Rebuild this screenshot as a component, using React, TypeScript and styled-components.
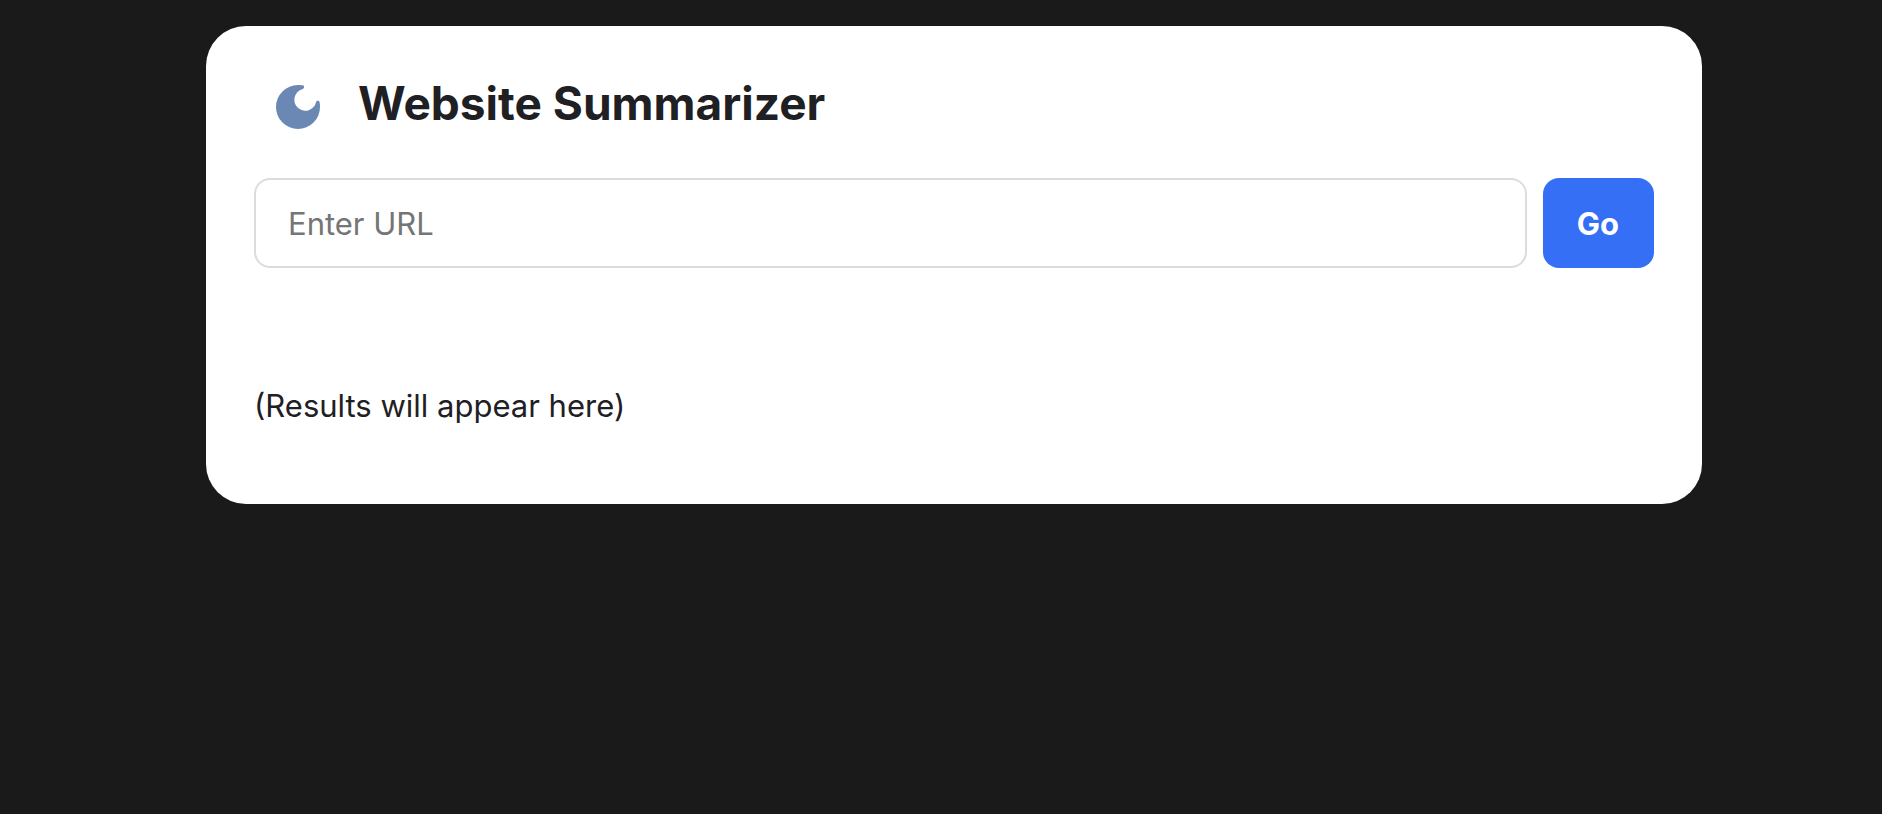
import React, { useState } from "react";
import styled, { createGlobalStyle } from "styled-components";

const GlobalStyle = createGlobalStyle`
  * { box-sizing: border-box; }
  body {
    margin: 0;
    background: #1a1a1a;
    color: #1f2023;
    font-family: Inter, "Liberation Sans", sans-serif;
  }
`;

const Page = styled.main`
  padding: 26px 180px 26px 206px;
`;

const Card = styled.section`
  padding: 48px;
  border-radius: 40px;
  background: #ffffff;
`;

const Header = styled.header`
  display: flex;
  align-items: flex-start;
  gap: 36px;
  padding-left: 20px;
  height: 60px;
`;

const Title = styled.h1`
  margin: 0;
  font-size: 46px;
  line-height: 58px;
  font-weight: 700;
`;

const ThemeToggle = styled.button`
  display: flex;
  padding: 10px 1px 0;
  border: 0;
  background: none;
  color: #6b88b5;
  cursor: pointer;
`;

const UrlForm = styled.form`
  display: flex;
  gap: 16px;
  margin-top: 44px;
`;

const UrlInput = styled.input`
  flex: 1;
  min-width: 0;
  height: 90px;
  padding: 0 32px;
  border: 2px solid #dcdcdc;
  border-radius: 16px;
  background: #ffffff;
  font: 400 31px/40px Inter, "Liberation Sans", sans-serif;
  &::placeholder { color: #757575; opacity: 1; }
`;

const GoButton = styled.button`
  height: 90px;
  padding: 2px 35px 0 34px;
  border: 0;
  border-radius: 16px;
  background: #356ff6;
  color: #ffffff;
  font: 700 31px/40px Inter, "Liberation Sans", sans-serif;
  cursor: pointer;
`;

const Results = styled.p`
  margin: 112px 0 0;
  padding: 6px 0 30px;
  font-size: 31px;
  line-height: 40px;
`;

export default function App() {
  const [url, setUrl] = useState("");
  return (
    <Page>
      <GlobalStyle />
      <Card>
        <Header>
          <ThemeToggle type="button" aria-label="Toggle theme">
            <svg width="46" height="46" viewBox="0 0 46 46" fill="currentColor" aria-hidden="true">
              <path d="M23 1A22 22 0 1 0 45 23Q45 20.5 44.6 18.3C44.1 16.3 41.8 16.4 41.1 18A11 11 0 1 1 26.5 5.4L27.8 4.9C29.6 4 29.6 1.6 27.6 1.3Q25.5 1 23 1Z" />
            </svg>
          </ThemeToggle>
          <Title>Website Summarizer</Title>
        </Header>
        <UrlForm onSubmit={(e) => e.preventDefault()}>
          <UrlInput
            type="text"
            aria-label="Website URL"
            placeholder="Enter URL"
            value={url}
            onChange={(e) => setUrl(e.target.value)}
          />
          <GoButton type="submit">Go</GoButton>
        </UrlForm>
        <Results>(Results will appear here)</Results>
      </Card>
    </Page>
  );
}
